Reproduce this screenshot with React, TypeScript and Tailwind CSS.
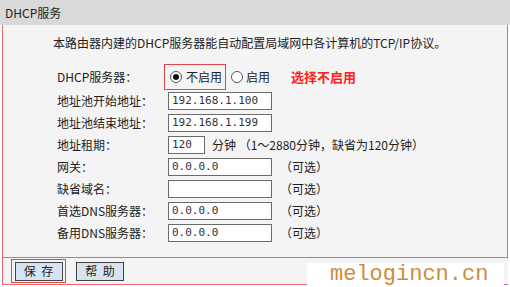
import React from "react";

const cjk = "font-['Noto_Sans_CJK_SC','Noto_Sans',sans-serif]";

function Row({ label, children }: { label: string; children: React.ReactNode }) {
  return (
    <div className="flex h-[22px] items-center">
      <div className="w-[111px] shrink-0 text-[12px] leading-[14px] text-[#222]">{label}</div>
      {children}
    </div>
  );
}

function Box({ value, w = "w-[104px]" }: { value: string; w?: string }) {
  return (
    <div
      className={`${w} flex h-[18px] shrink-0 items-center border border-[#6b6b6b] bg-white px-[3px] font-['DejaVu_Sans_Mono',monospace] text-[11px] text-[#333]`}
    >
      {value}
    </div>
  );
}

function Opt() {
  return <span className="ml-[8px] text-[12px] text-[#222]">（可选）</span>;
}

function Radio({ checked }: { checked: boolean }) {
  return (
    <span className="flex h-[12px] w-[12px] items-center justify-center rounded-full border border-[#555] bg-white">
      {checked && <span className="h-[6px] w-[6px] rounded-full bg-[#111]" />}
    </span>
  );
}

function Btn({ label }: { label: string }) {
  return (
    <div className="flex h-[19px] w-[48px] items-center justify-center whitespace-pre border border-[#444] bg-[#d8e3f0] text-[12px] leading-none text-[#222]">
      {label}
    </div>
  );
}

export default function App() {
  return (
    <div className={`relative h-[287px] w-[510px] overflow-hidden bg-white ${cjk}`}>
      <div className="flex h-[25px] items-center bg-[#d9d9d9] pl-[5px] text-[12px] text-[#222]">DHCP服务</div>
      <div className="ml-[2px] h-[233px] w-[506px] border-x border-b border-[#e36a6a] bg-[#f4f4f4] pt-[10px]">
        <div className="flex h-[16px] items-center pl-[50px] text-[12px] text-[#222]">
          本路由器内建的DHCP服务器能自动配置局域网中各计算机的TCP/IP协议。
        </div>
        <div className="pl-[54px] pt-[13px]">
          <div className="flex h-[26px] items-center">
            <div className="w-[107px] shrink-0 text-[12px] text-[#222]">DHCP服务器：</div>
            <div className="flex h-[26px] items-center gap-[4px] border-[1.5px] border-[#e04848] pl-[5px] pr-[3px] text-[12px] text-[#222]">
              <Radio checked />
              <span>不启用</span>
            </div>
            <div className="ml-[5px] flex items-center gap-[3px] text-[12px] text-[#222]">
              <Radio checked={false} />
              <span>启用</span>
            </div>
            <span className="ml-[21px] text-[13px] font-bold text-[#ff2020]">选择不启用</span>
          </div>
          <Row label="地址池开始地址：">
            <Box value="192.168.1.100" />
          </Row>
          <Row label="地址池结束地址：">
            <Box value="192.168.1.199" />
          </Row>
          <Row label="地址租期：">
            <Box value="120" w="w-[37px]" />
            <span className="ml-[7px] text-[12px] text-[#222]">分钟 （1～2880分钟，缺省为120分钟）</span>
          </Row>
          <Row label="网关：">
            <Box value="0.0.0.0" />
            <Opt />
          </Row>
          <Row label="缺省域名：">
            <Box value="" />
            <Opt />
          </Row>
          <Row label="首选DNS服务器：">
            <Box value="0.0.0.0" />
            <Opt />
          </Row>
          <Row label="备用DNS服务器：">
            <Box value="0.0.0.0" />
            <Opt />
          </Row>
        </div>
      </div>
      <div className="ml-[2px] flex h-[27px] w-[506px] items-center gap-[10px] border-b border-l border-[#e36a6a] bg-[#f4f4f4] pl-[8px]">
        <div className="flex h-[24px] w-[55px] items-center justify-center border-[1.5px] border-[#e04848]">
          <Btn label="保  存" />
        </div>
        <Btn label="帮  助" />
      </div>
      <div className="absolute left-[307px] top-[263px] flex h-[24px] w-[197px] items-center bg-white pl-[23px] font-['Liberation_Mono',monospace] text-[22px] leading-[24px] text-[#d08b3e]">
        melogincn.cn
      </div>
    </div>
  );
}
